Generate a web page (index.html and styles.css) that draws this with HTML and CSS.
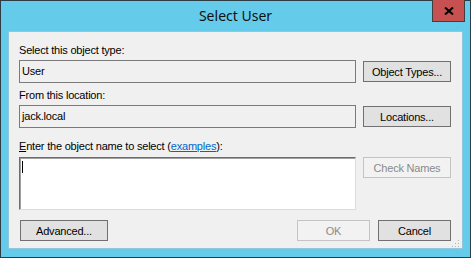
FILE: index.html
```html
<!DOCTYPE html>
<html lang="en">
<head>
  <meta charset="UTF-8" />
  <title>Select User</title>
  <link rel="stylesheet" href="styles.css">
</head>
<body>
  <div class="window">
    <div class="titlebar">
      <span></span>
      <span class="title">Select User</span>
      <button class="close-btn" aria-label="Close">
        <svg width="10" height="8" viewBox="0 0 10 8"><path d="M1 0.5 L9 7.5 M9 0.5 L1 7.5" stroke="#000" stroke-width="2"/></svg>
      </button>
    </div>
    <div class="client">
      <div class="label">Select this object type:</div>
      <div class="row">
        <div class="field">User</div>
        <button class="btn">Object Types...</button>
      </div>

      <div class="label label-gap">From this location:</div>
      <div class="row">
        <div class="field">jack.local</div>
        <button class="btn">Locations...</button>
      </div>

      <div class="label label-gap-lg"><u>E</u>nter the object name to select (<a href="#" class="link">examples</a>):</div>
      <div class="row row-top">
        <div class="names-box"><span class="caret"></span></div>
        <button class="btn btn-disabled">Check Names</button>
      </div>

      <div class="footer">
        <button class="btn btn-advanced">Advanced...</button>
        <div class="footer-right">
          <button class="btn btn-disabled btn-ok">OK</button>
          <button class="btn btn-cancel">Cancel</button>
        </div>
      </div>

      <svg class="grip" width="8" height="8" viewBox="0 0 8 8">
        <rect x="6" y="0" width="1" height="1" fill="#b8b8b8"/>
        <rect x="3" y="3" width="1" height="1" fill="#b8b8b8"/>
        <rect x="6" y="3" width="1" height="1" fill="#b8b8b8"/>
        <rect x="0" y="6" width="1" height="1" fill="#b8b8b8"/>
        <rect x="3" y="6" width="1" height="1" fill="#b8b8b8"/>
        <rect x="6" y="6" width="1" height="1" fill="#b8b8b8"/>
      </svg>
    </div>
  </div>
</body>
</html>
```

FILE: styles.css
```css
:root {
  --frame: #65cbeb;
  --client-bg: #f0f0f0;
  --text: #000;
  --btn-bg: #e1e1e1;
  --btn-border: #707070;
}
* {
  box-sizing: border-box;
}
body {
  margin: 0;
  font-family: 'Liberation Sans', Arial, sans-serif;
  font-size: 11px;
  letter-spacing: -0.2px;
  color: var(--text);
}
.window {
  width: 471px;
  height: 258px;
  background: var(--frame);
  border: 1px solid #2e3d44;
  display: flex;
  flex-direction: column;
}
.titlebar {
  height: 30px;
  display: grid;
  grid-template-columns: 1fr auto 1fr;
  align-items: start;
}
.title {
  font-family: 'Noto Sans', 'Open Sans', sans-serif;
  font-size: 14px;
  letter-spacing: 0;
  line-height: 29px;
  color: #111;
}
.close-btn {
  justify-self: end;
  margin-top: -1px;
  margin-right: 5px;
  width: 33px;
  height: 22px;
  padding: 0;
  background: #c75050;
  border: 1px solid #3f3f3f;
  border-top: none;
  display: flex;
  align-items: center;
  justify-content: center;
}
.client {
  position: relative;
  flex: 1;
  margin: 0 7px 8px 7px;
  background: var(--client-bg);
  border: 1px solid #8fc8dc;
  padding: 11px 11px 0 10px;
}
.label {
  line-height: 14px;
}
.label-gap {
  margin-top: 5px;
}
.label-gap-lg {
  margin-top: 11px;
}
.row {
  display: flex;
  align-items: center;
  gap: 7px;
  margin-top: 3px;
}
.row-top {
  align-items: flex-start;
  margin-top: 4px;
}
.field {
  width: 337px;
  height: 23px;
  border: 1px solid #7a7a7a;
  background: var(--client-bg);
  padding: 0 2px;
  line-height: 21px;
}
.btn {
  font-family: 'Liberation Sans', Arial, sans-serif;
  font-size: 11px;
  letter-spacing: -0.2px;
  color: var(--text);
  width: 88px;
  height: 21px;
  padding: 0;
  background: var(--btn-bg);
  border: 1px solid var(--btn-border);
}
.btn-disabled {
  color: #8a8a8a;
  background: #f2f2f2;
  border-color: #c4c4c4;
}
.names-box {
  width: 337px;
  height: 53px;
  background: #fff;
  border-top: 1px solid #6d6d6d;
  border-left: 1px solid #6d6d6d;
  border-right: 1px solid #dcdcdc;
  border-bottom: 1px solid #dcdcdc;
  box-shadow: inset 1px 1px 0 #a0a0a0;
  padding: 3px 0 0 2px;
}
.caret {
  display: block;
  width: 1px;
  height: 12px;
  background: #000;
}
.link {
  color: #0066cc;
}
.footer {
  display: flex;
  justify-content: space-between;
  margin-top: 10px;
}
.btn-advanced {
  margin-left: 1px;
}
.footer-right {
  display: flex;
  gap: 8px;
}
.btn-ok {
  width: 73px;
}
.btn-cancel {
  width: 73px;
}
.grip {
  position: absolute;
  right: 2px;
  bottom: 0;
}
```
